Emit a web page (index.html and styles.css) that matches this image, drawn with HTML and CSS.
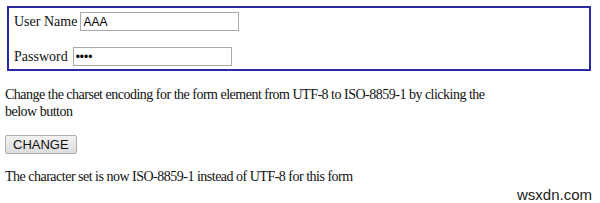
FILE: index.html
```html
<!DOCTYPE html>
<html lang="en">
  <head>
    <meta charset="UTF-8" />
    <title>Form charset</title>
    <link rel="stylesheet" href="styles.css">
  </head>
  <body>
    <form id="form1" class="box" accept-charset="UTF-8">
      <div class="row">
        <label for="user">User Name</label>
        <input type="text" id="user" class="user" value="AAA" />
      </div>
      <div class="row">
        <label for="pass">Password</label>
        <input type="password" id="pass" class="pass" value="abcd" />
      </div>
    </form>
    <p class="info">
      Change the charset encoding for the form element from UTF-8 to
      ISO-8859-1 by clicking the below button
    </p>
    <button class="btn" type="button">CHANGE</button>
    <p class="result">
      The character set is now ISO-8859-1 instead of UTF-8 for this form
    </p>
    <span class="mark">wsxdn.com</span>
  </body>
</html>
```

FILE: styles.css
```css
body {
  margin: 6px 5px;
  font-family: "Liberation Serif", serif;
  font-size: 14px;
  color: #111;
  background: #fff;
}
.box {
  border: 2px solid #2a2aa6;
  padding: 4px 5px 3px;
  margin: 0 4px 0 2px;
}
.row {
  display: flex;
  align-items: center;
  height: 19px;
  margin-bottom: 16px;
}
.row:last-child {
  margin-bottom: 0;
}
.row label {
  margin-right: 3px;
}
.row input {
  font-family: "Liberation Sans", sans-serif;
  font-size: 12px;
  height: 19px;
  box-sizing: border-box;
  padding: 1px 2px;
  border: 1px solid #a9a9a9;
}
.user {
  width: 159px;
}
.pass {
  width: 159px;
  margin-left: 2px;
}
.info {
  margin: 15px 0 15px;
  line-height: 17px;
  width: 495px;
  letter-spacing: -0.5px;
}
.btn {
  font-family: "Liberation Sans", sans-serif;
  font-size: 13px;
  padding: 1px 7px;
  height: 19px;
  border: 1px solid #adadad;
  border-radius: 2px;
  background: linear-gradient(#f2f2f2, #dcdcdc);
  color: #111;
}
.result {
  margin: 15px 0 0;
  letter-spacing: -0.5px;
}
.mark {
  position: absolute;
  top: 186px;
  right: 8px;
  line-height: 17px;
  font-family: "Liberation Sans", sans-serif;
  font-size: 15px;
  color: #222;
}
```
